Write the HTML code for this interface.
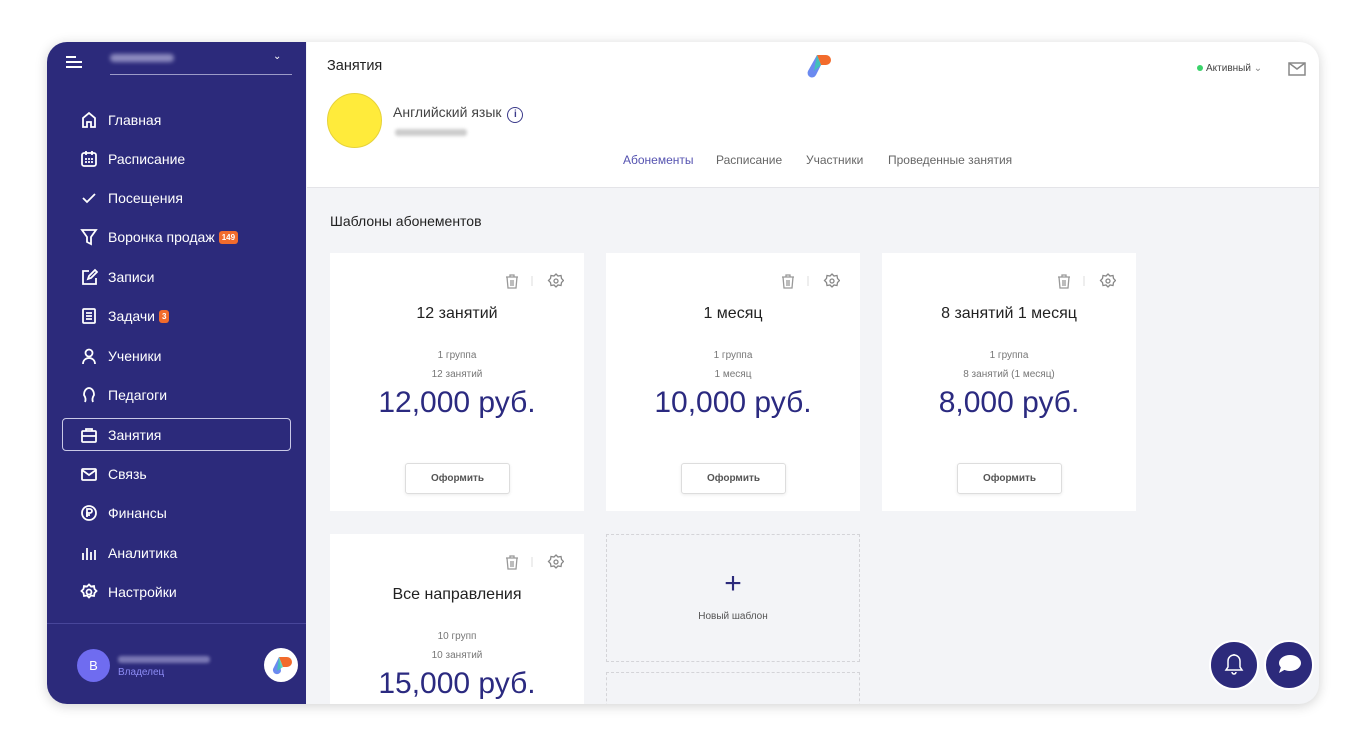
<!DOCTYPE html>
<html><head><meta charset="utf-8"><style>
*{box-sizing:border-box;margin:0;padding:0}
html,body{width:1367px;height:747px;overflow:hidden}
body{background:#fff;font-family:"Liberation Sans",sans-serif;position:relative}
.app{position:absolute;left:47px;top:42px;width:1272px;height:662px;border-radius:20px;overflow:hidden;background:#f3f4f7;box-shadow:0 2px 12px rgba(0,0,0,.18)}
.side{position:absolute;left:0;top:0;width:259px;height:662px;background:#2c2a7b;color:#fff}
.mi{position:absolute;left:33px;height:20px;font-size:14px;display:flex;align-items:center}
.mi svg{width:18px;height:18px;margin-right:10px;fill:none;stroke:#fff;stroke-width:1.8}
.badge{background:#f26b2c;color:#fff;font-size:8px;font-weight:bold;border-radius:3px;padding:2px 3px;margin-left:4px}
.head{position:absolute;left:260px;top:0;width:1012px;height:146px;background:#fff;border-bottom:1px solid #e4e4e8}
.card{position:absolute;width:254px;height:258px;background:#fff;text-align:center;color:#222}
.card .t{position:absolute;top:52px;width:100%;font-size:16px}
.card .s{position:absolute;width:100%;font-size:10px;color:#777}
.card .p{position:absolute;top:133px;width:100%;font-size:30px;color:#2b2a80}
.card .b{position:absolute;left:75px;top:210px;width:105px;height:31px;border:1px solid #ddd;border-radius:3px;font-size:10px;font-weight:bold;color:#555;line-height:29px;box-shadow:0 1px 3px rgba(0,0,0,.08)}
.ic{position:absolute;top:20px;right:20px;width:60px;height:16px}
.dash{position:absolute;border:1.5px dashed #d4d4d8;background:#f3f4f7}
.fab{position:absolute;width:50px;height:50px;border-radius:50%;background:#2c2a7b;border:2px solid #fff}
</style></head><body>
<div class="app">
<div class="side">
 <div style="position:absolute;left:19px;top:14px;width:16px">
  <div style="height:2px;background:#fff;width:10px;margin-bottom:3px"></div><div style="height:2px;background:#fff;width:16px;margin-bottom:3px"></div><div style="height:2px;background:#fff;width:16px"></div></div>
 <div style="position:absolute;left:63px;top:12px;width:64px;height:8px;background:#8e8cc0;border-radius:4px;filter:blur(2px)"></div>
 <div style="position:absolute;left:226px;top:9px;font-size:10px">⌄</div>
 <div style="position:absolute;left:63px;top:32px;width:182px;height:1px;background:#9c9bc8"></div>
 <div class="mi" style="top:68px"><svg viewBox="0 0 18 18"><path d="M3 16V7l6-5 6 5v9h-4v-5H7v5z"/></svg>Главная</div>
 <div class="mi" style="top:107px"><svg viewBox="0 0 18 18"><rect x="2" y="3" width="14" height="13" rx="2"/><path d="M6 1v4M12 1v4M5 9h2M8 9h2M11 9h2M5 12h2M8 12h2M11 12h2"/></svg>Расписание</div>
 <div class="mi" style="top:146px"><svg viewBox="0 0 18 18"><path d="M3 9l4 4 8-8"/></svg>Посещения</div>
 <div class="mi" style="top:185px"><svg viewBox="0 0 18 18"><path d="M2 2h14l-5 7v7l-4-2V9z"/></svg>Воронка продаж<span class="badge">149</span></div>
 <div class="mi" style="top:225px"><svg viewBox="0 0 18 18"><path d="M9 3H3v13h13v-6M8 11l1-3 6-6 2 2-6 6z"/></svg>Записи</div>
 <div class="mi" style="top:264px"><svg viewBox="0 0 18 18"><rect x="3" y="2" width="12" height="14" rx="1"/><path d="M6 6h6M6 9h6M6 12h6"/></svg>Задачи<span class="badge">3</span></div>
 <div class="mi" style="top:304px"><svg viewBox="0 0 18 18"><circle cx="9" cy="6" r="3.5"/><path d="M3 17c0-4 3-6 6-6s6 2 6 6"/></svg>Ученики</div>
 <div class="mi" style="top:343px"><svg viewBox="0 0 18 18"><path d="M5 16c1-2 1-4-1-7 0-5 3-7 5-7s5 2 5 7c-2 3-2 5-1 7"/></svg>Педагоги</div>
 <div style="position:absolute;left:15px;top:376px;width:229px;height:33px;border:1px solid #c9c8e6;border-radius:4px"></div>
 <div class="mi" style="top:383px"><svg viewBox="0 0 18 18"><rect x="2" y="5" width="14" height="11" rx="1"/><path d="M6 5V3h6v2M2 10h14"/></svg>Занятия</div>
 <div class="mi" style="top:422px"><svg viewBox="0 0 18 18"><rect x="2" y="4" width="14" height="11" rx="1"/><path d="M2 5l7 5 7-5"/></svg>Связь</div>
 <div class="mi" style="top:461px"><svg viewBox="0 0 18 18"><circle cx="9" cy="9" r="7"/><path d="M7 13V5h3a2 2 0 010 4H6M6 11h4"/></svg>Финансы</div>
 <div class="mi" style="top:501px"><svg viewBox="0 0 18 18"><path d="M3 16V9M7 16V4M11 16V8M15 16V6"/></svg>Аналитика</div>
 <div class="mi" style="top:540px"><svg viewBox="0 0 18 18"><circle cx="9" cy="9" r="2.5"/><path d="M9 1.5l2 2 3-.5.5 3 2 2-2 2-.5 3-3-.5-2 2-2-2-3 .5-.5-3-2-2 2-2 .5-3 3 .5z"/></svg>Настройки</div>
 <div style="position:absolute;left:0;top:581px;width:259px;height:1px;background:#48469a"></div>
 <div style="position:absolute;left:30px;top:607px;width:33px;height:33px;border-radius:50%;background:#6f6cf0;font-size:13px;text-align:center;line-height:33px">В</div>
 <div style="position:absolute;left:71px;top:614px;width:92px;height:7px;background:#7a78b4;border-radius:3px;filter:blur(1.5px)"></div>
 <div style="position:absolute;left:71px;top:625px;font-size:10px;color:#8d8cf5">Владелец</div>
 <div style="position:absolute;left:217px;top:606px;width:34px;height:34px;border-radius:50%;background:#fff">
  <svg viewBox="0 0 34 34" width="34" height="34"><path d="M15 9h8a5 5 0 010 10h-4z" fill="#f26b2c"/><path d="M15 9l-6 12a4 4 0 008 2z" fill="#6b8af0"/><path d="M15 9l4 10-6 4z" fill="#3bc9b0" opacity=".8"/></svg></div>
</div>
<div class="head">
 <div style="position:absolute;left:20px;top:16px;font-size:14.5px;color:#222">Занятия</div>
 <svg style="position:absolute;left:498px;top:12px" width="28" height="26" viewBox="0 0 28 26"><path d="M12 1h9a5 5 0 010 10h-5z" fill="#f26b2c"/><path d="M12 1L3 17a4 4 0 008 4l5-10z" fill="#6b8af0"/><path d="M12 1l4 10-7 6z" fill="#3bc9b0" opacity=".85"/></svg>
 <div style="position:absolute;left:20px;top:51px;width:55px;height:55px;border-radius:50%;background:#ffeb3b;border:1px solid #e6d23a"></div>
 <div style="position:absolute;left:86px;top:62px;font-size:14px;color:#444">Английский язык <span style="display:inline-block;width:16px;height:16px;border:1.5px solid #3b3a8a;border-radius:50%;font-size:10px;text-align:center;line-height:13px;color:#3b3a8a;font-weight:bold;margin-left:2px">i</span></div>
 <div style="position:absolute;left:88px;top:87px;width:72px;height:7px;background:#ccc;border-radius:3px;filter:blur(1.5px)"></div>
 <div style="position:absolute;left:316px;top:111px;font-size:12px;color:#5553b0">Абонементы</div>
 <div style="position:absolute;left:409px;top:111px;font-size:12px;color:#666">Расписание</div>
 <div style="position:absolute;left:499px;top:111px;font-size:12px;color:#666">Участники</div>
 <div style="position:absolute;left:581px;top:111px;font-size:12px;color:#666">Проведенные занятия</div>
 <div style="position:absolute;left:890px;top:21px;font-size:10px;color:#444"><span style="display:inline-block;width:6px;height:6px;border-radius:50%;background:#3ad36a;margin-right:3px"></span>Активный <span style="color:#888">⌄</span></div>
 <svg style="position:absolute;left:981px;top:20px" width="18" height="14" viewBox="0 0 18 14"><rect x="1" y="1" width="16" height="12" fill="none" stroke="#888" stroke-width="1.5"/><path d="M1 1l8 6 8-6" fill="none" stroke="#888" stroke-width="1.5"/></svg>
</div>
<div style="position:absolute;left:283px;top:171px;font-size:14px;color:#222">Шаблоны абонементов</div>
<div class="card" style="left:283px;top:211px"><svg class="ic" viewBox="0 0 60 16"><path d="M2 4h12M6 4V2h4v2M3 4l1 11h8l1-11M7 7v6M9 7v6" fill="none" stroke="#999" stroke-width="1.3"/><path d="M28 3v10" stroke="#ddd"/><circle cx="52" cy="8" r="2" fill="none" stroke="#888" stroke-width="1.3"/><path d="M52 1l2 2 3-.5.5 3 2 2-2 2-.5 3-3-.5-2 2-2-2-3 .5-.5-3-2-2 2-2 .5-3 3 .5z" fill="none" stroke="#888" stroke-width="1.3"/></svg><div class="t">12 занятий</div><div class="s" style="top:97px">1 группа</div><div class="s" style="top:116px">12 занятий</div><div class="p">12,000 руб.</div><div class="b">Оформить</div></div>
<div class="card" style="left:559px;top:211px"><svg class="ic" viewBox="0 0 60 16"><path d="M2 4h12M6 4V2h4v2M3 4l1 11h8l1-11M7 7v6M9 7v6" fill="none" stroke="#999" stroke-width="1.3"/><path d="M28 3v10" stroke="#ddd"/><circle cx="52" cy="8" r="2" fill="none" stroke="#888" stroke-width="1.3"/><path d="M52 1l2 2 3-.5.5 3 2 2-2 2-.5 3-3-.5-2 2-2-2-3 .5-.5-3-2-2 2-2 .5-3 3 .5z" fill="none" stroke="#888" stroke-width="1.3"/></svg><div class="t">1 месяц</div><div class="s" style="top:97px">1 группа</div><div class="s" style="top:116px">1 месяц</div><div class="p">10,000 руб.</div><div class="b">Оформить</div></div>
<div class="card" style="left:835px;top:211px"><svg class="ic" viewBox="0 0 60 16"><path d="M2 4h12M6 4V2h4v2M3 4l1 11h8l1-11M7 7v6M9 7v6" fill="none" stroke="#999" stroke-width="1.3"/><path d="M28 3v10" stroke="#ddd"/><circle cx="52" cy="8" r="2" fill="none" stroke="#888" stroke-width="1.3"/><path d="M52 1l2 2 3-.5.5 3 2 2-2 2-.5 3-3-.5-2 2-2-2-3 .5-.5-3-2-2 2-2 .5-3 3 .5z" fill="none" stroke="#888" stroke-width="1.3"/></svg><div class="t">8 занятий 1 месяц</div><div class="s" style="top:97px">1 группа</div><div class="s" style="top:116px">8 занятий (1 месяц)</div><div class="p">8,000 руб.</div><div class="b">Оформить</div></div>
<div class="card" style="left:283px;top:492px;height:170px"><svg class="ic" viewBox="0 0 60 16"><path d="M2 4h12M6 4V2h4v2M3 4l1 11h8l1-11M7 7v6M9 7v6" fill="none" stroke="#999" stroke-width="1.3"/><path d="M28 3v10" stroke="#ddd"/><circle cx="52" cy="8" r="2" fill="none" stroke="#888" stroke-width="1.3"/><path d="M52 1l2 2 3-.5.5 3 2 2-2 2-.5 3-3-.5-2 2-2-2-3 .5-.5-3-2-2 2-2 .5-3 3 .5z" fill="none" stroke="#888" stroke-width="1.3"/></svg><div class="t">Все направления</div><div class="s" style="top:97px">10 групп</div><div class="s" style="top:116px">10 занятий</div><div class="p">15,000 руб.</div></div>
<div class="dash" style="left:559px;top:492px;width:254px;height:128px"><div style="position:absolute;top:32px;width:100%;text-align:center;font-size:30px;color:#2c2a7b;font-weight:300">+</div><div style="position:absolute;top:76px;width:100%;text-align:center;font-size:10px;color:#555">Новый шаблон</div></div>
<div class="dash" style="left:559px;top:630px;width:254px;height:40px"></div>
<div class="fab" style="left:1162px;top:598px"><svg width="46" height="46" viewBox="0 0 46 46"><path d="M15 28h16l-2-3v-6a6 6 0 00-12 0v6zM21 30a2 2 0 004 0M23 12v1" fill="none" stroke="#fff" stroke-width="1.5"/></svg></div>
<div class="fab" style="left:1217px;top:598px"><svg width="46" height="46" viewBox="0 0 46 46"><ellipse cx="24" cy="21" rx="11" ry="8" fill="#fff"/><path d="M15 25l-2 6 7-4z" fill="#fff"/></svg></div>
</div>
</body></html>
